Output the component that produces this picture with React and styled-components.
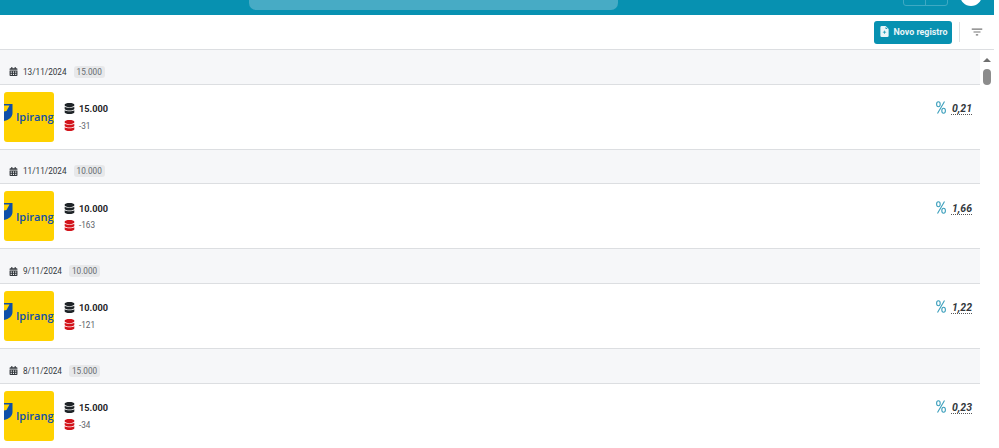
import React from "react";
import styled, { createGlobalStyle } from "styled-components";
import { FaCalendarAlt, FaDatabase } from "react-icons/fa";
import { BsFileEarmarkPlusFill } from "react-icons/bs";
import { MdFilterList } from "react-icons/md";

const Global = createGlobalStyle`
  html, body {
    margin: 0;
    height: 100%;
    background: #fff;
    overflow: hidden;
    font-family: Roboto, "Liberation Sans", sans-serif;
  }
`;

const Page = styled.div`
  width: 994px;
  height: 448px;
  display: flex;
  flex-direction: column;
  overflow: hidden;
`;

const Header = styled.header`
  height: 15px;
  flex: none;
  background: #0791b1;
  display: flex;
  align-items: flex-end;
  overflow: hidden;
`;

const Search = styled.div`
  width: 369px;
  height: 30px;
  margin: 0 0 5px 249px;
  border-radius: 7px;
  background: #47abc5;
`;

const HeaderButtons = styled.div`
  width: 45px;
  height: 20px;
  margin: 0 0 9px 285px;
  display: flex;
  border: 1px solid #3fa9c3;
  border-radius: 3px;
  box-sizing: border-box;
  span {
    flex: 1;
  }
  span + span {
    border-left: 1px solid #3fa9c3;
  }
`;

const Avatar = styled.div`
  width: 22px;
  height: 22px;
  margin: 0 0 9px 12px;
  border-radius: 50%;
  background: #fff;
`;

const Toolbar = styled.div`
  height: 35px;
  flex: none;
  box-sizing: border-box;
  border-bottom: 1px solid #dcdee1;
  display: flex;
  align-items: center;
  justify-content: flex-end;
  padding: 0 10px 0 0;
`;

const NewButton = styled.button`
  width: 78px;
  height: 23px;
  padding: 0 0 1px;
  border: 0;
  border-radius: 3px;
  background: #0791b1;
  color: #e9f5f8;
  font: 700 8.9px Roboto, sans-serif;
  display: flex;
  align-items: center;
  justify-content: center;
  gap: 4px;
`;

const Divider = styled.div`
  width: 1px;
  height: 20px;
  margin: 0 10px 0 7px;
  background: #dfe1e4;
`;

const Body = styled.div`
  flex: 1;
  min-height: 0;
  display: flex;
`;

const List = styled.div`
  flex: 1;
  min-width: 0;
`;

const GroupHeader = styled.div`
  height: 34.67px;
  box-sizing: border-box;
  background: #f6f7f9;
  border-bottom: 1px solid #dcdee1;
  display: flex;
  align-items: center;
  padding: 10px 0 0 9px;
  color: #33383d;
  font-size: 8.2px;
`;

const DateText = styled.span`
  margin-left: 5px;
`;

const Badge = styled.span`
  margin-left: 7px;
  padding: 1px 3px;
  border-radius: 3px;
  background: #e7e8ea;
  color: #666b70;
  font-size: 8.2px;
`;

const Row = styled.div`
  height: 65px;
  box-sizing: border-box;
  border-bottom: 1px solid #dcdee1;
  display: flex;
  padding: 7px 8px 0 4px;
`;

const Logo = styled.div`
  width: 50px;
  height: 50px;
  flex: none;
  position: relative;
  overflow: hidden;
  border-radius: 3px;
  background: #ffd200;
  display: flex;
  align-items: center;
  padding-left: 12px;
  box-sizing: border-box;
`;

const LogoMark = styled.svg`
  position: absolute;
  left: 0;
  top: 12px;
`;

const LogoText = styled.span`
  color: #0f4fa8;
  font: 600 11px "Open Sans", sans-serif;
  white-space: nowrap;
`;

const Amounts = styled.div`
  margin: 11px 0 0 10px;
  display: flex;
  flex-direction: column;
  gap: 5px;
`;

const AmountLine = styled.div`
  display: flex;
  align-items: center;
  gap: 4px;
  height: 12px;
  color: ${(p) => (p.$main ? "#1f2428" : "#5c6166")};
  font-size: ${(p) => (p.$main ? "9.2px" : "8.2px")};
  font-weight: ${(p) => (p.$main ? 700 : 400)};
  svg {
    color: ${(p) => (p.$main ? "#1f2428" : "#d3131a")};
  }
`;

const Rate = styled.div`
  margin-left: auto;
  margin-top: 9px;
  height: 16px;
  display: flex;
  align-items: center;
  gap: 6px;
`;

const PercentMark = styled.svg`
  flex: none;
  color: #3c9fbc;
  margin-top: -2px;
`;

const RateValue = styled.span`
  color: #33383d;
  font-size: 10.5px;
  font-weight: 700;
  font-style: italic;
  text-decoration: underline dotted #555;
  text-underline-offset: 2px;
`;

const Scrollbar = styled.div`
  width: 14px;
  flex: none;
  display: flex;
  flex-direction: column;
  align-items: center;
  background: #fff;
`;

const ArrowUp = styled.div`
  width: 0;
  height: 0;
  margin-top: 8px;
  border-left: 4px solid transparent;
  border-right: 4px solid transparent;
  border-bottom: 4px solid #6e6e6e;
`;

const Thumb = styled.div`
  width: 8px;
  height: 16px;
  margin-top: 7px;
  border-radius: 4px;
  background: #8c8c8c;
`;

const entries = [
  { date: "13/11/2024", total: "15.000", spent: "-31", rate: "0,21" },
  { date: "11/11/2024", total: "10.000", spent: "-163", rate: "1,66" },
  { date: "9/11/2024", total: "10.000", spent: "-121", rate: "1,22" },
  { date: "8/11/2024", total: "15.000", spent: "-34", rate: "0,23" },
];

export default function App() {
  return (
    <Page>
      <Global />
      <Header>
        <Search />
        <HeaderButtons>
          <span />
          <span />
        </HeaderButtons>
        <Avatar />
      </Header>
      <Toolbar>
        <NewButton>
          <BsFileEarmarkPlusFill size={11} />
          Novo registro
        </NewButton>
        <Divider />
        <MdFilterList size={14} color="#777" />
      </Toolbar>
      <Body>
        <List>
          {entries.map((e) => (
            <React.Fragment key={e.date}>
              <GroupHeader>
                <FaCalendarAlt size={9} />
                <DateText>{e.date}</DateText>
                <Badge>{e.total}</Badge>
              </GroupHeader>
              <Row>
                <Logo>
                  <LogoMark width="9" height="17" viewBox="0 0 9 17">
                    <path d="M0 0H8.5V9C8.5 13 5 16 0 17Z" fill="#0f4fa8" />
                    <path d="M0 1.5H5.5L2.5 7L0 7.5Z" fill="#ffd200" />
                  </LogoMark>
                  <LogoText>Ipirang</LogoText>
                </Logo>
                <Amounts>
                  <AmountLine $main>
                    <FaDatabase size={11} />
                    {e.total}
                  </AmountLine>
                  <AmountLine>
                    <FaDatabase size={11} />
                    {e.spent}
                  </AmountLine>
                </Amounts>
                <Rate>
                  <PercentMark width="10" height="13" viewBox="0 0 10 13" fill="none" stroke="currentColor" strokeWidth="1.1">
                    <path d="M8.5 .5L1.5 12.5" />
                    <ellipse cx="2.4" cy="3.2" rx="1.8" ry="2.5" />
                    <ellipse cx="7.6" cy="9.8" rx="1.8" ry="2.5" />
                  </PercentMark>
                  <RateValue>{e.rate}</RateValue>
                </Rate>
              </Row>
            </React.Fragment>
          ))}
        </List>
        <Scrollbar>
          <ArrowUp />
          <Thumb />
        </Scrollbar>
      </Body>
    </Page>
  );
}
